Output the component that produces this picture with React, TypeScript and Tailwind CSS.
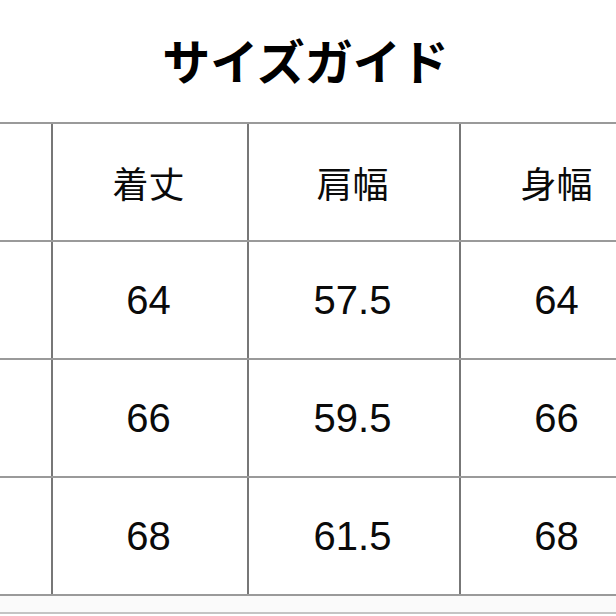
import React from 'react'

const headers = ['着丈', '肩幅', '身幅']
const rows = [
    ['64', '57.5', '64'],
    ['66', '59.5', '66'],
    ['68', '61.5', '68'],
]

// widths of the three visible data columns, left border included (the size column is cut off at the left)
const colWidths = ['w-[196px]', 'w-[212px]', 'w-[196px]']

function Row({ cells, head }: { cells: string[]; head?: boolean }) {
    return (
        <div className="flex h-[118px] border-t-2 border-[#9a9a9a]">
            <div className="w-[51px] shrink-0" />
            {cells.map((c, i) => (
                <div
                    key={i}
                    className={`${colWidths[i]} shrink-0 flex items-center justify-center pr-[3px] border-l-2 border-[#777] ${
                        head
                            ? "text-[36px] font-['Noto_Sans_CJK_JP',sans-serif] font-normal"
                            : "text-[40px] font-['Liberation_Sans',Arial,sans-serif]"
                    }`}
                >
                    {c}
                </div>
            ))}
            <div className="w-[60px] shrink-0 border-l-2 border-[#777]" />
        </div>
    )
}

export default function App() {
    return (
        <div className="w-[616px] h-[616px] overflow-hidden bg-white text-[#0a0a0a]">
            <div className="h-[122px] flex items-center justify-center pb-[5px] pr-[5px]">
                <h1 className="text-[48px] leading-none font-bold font-['Noto_Sans_CJK_JP',sans-serif] text-black">
                    サイズガイド
                </h1>
            </div>
            <div className="w-[720px]">
                <Row cells={headers} head />
                {rows.map((r, i) => (
                    <Row key={i} cells={r} />
                ))}
                <div className="h-[20px] border-t-2 border-[#9a9a9a] bg-[#fafafa] border-b-2 border-b-[#c4c4c4]" />
            </div>
        </div>
    )
}
